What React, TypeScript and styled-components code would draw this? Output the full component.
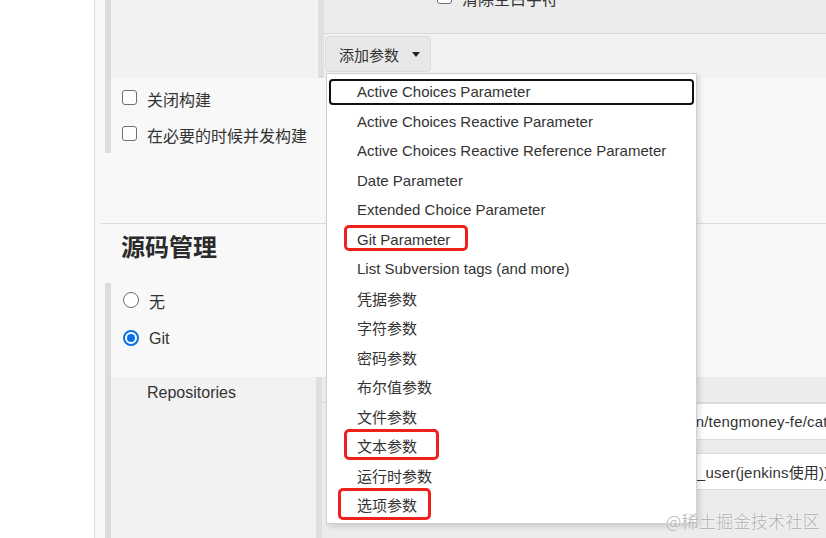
import React from 'react';
import styled, { createGlobalStyle } from 'styled-components';

const GlobalStyle = createGlobalStyle`
	html, body {
		margin: 0;
		padding: 0;
		background: #fff;
	}
	body {
		font-family: 'Liberation Sans', Arial, 'Noto Sans CJK SC', sans-serif;
		color: #333;
		overflow: hidden;
	}
	* {
		box-sizing: border-box;
	}
`;

const Page = styled.div`
	width: 826px;
	height: 538px;
	display: flex;
	overflow: hidden;
	position: relative;
`;

const Gutter = styled.div`
	width: 95px;
	flex: none;
	background: #fff;
	border-right: 1px solid #d9d9d9;
`;

const Main = styled.div`
	flex: 1;
	background: #f8f8f8;
	padding-left: 10px;
	display: flex;
	flex-direction: column;
`;

const Nested = styled.div<{ $height?: number }>`
	border-left: 6px solid #dcdcdc;
	height: ${(p) => (p.$height ? `${p.$height}px` : 'auto')};
	flex: ${(p) => (p.$height ? 'none' : '1')};
	display: flex;
	flex-direction: column;
`;

const Block = styled.div<{ $height?: number; $gap?: number }>`
	display: flex;
	height: ${(p) => (p.$height ? `${p.$height}px` : 'auto')};
	flex: ${(p) => (p.$height ? 'none' : '1')};
	margin-top: ${(p) => p.$gap ?? 0}px;
`;

const BlockLabel = styled.div<{ $width: number }>`
	width: ${(p) => p.$width}px;
	flex: none;
	background: #f2f2f2;
	padding: 7px 0 0 36px;
	font-size: 16px;
	line-height: 18px;
`;

const BlockBody = styled.div`
	flex: 1;
	border-left: 6px solid #dfdfdf;
	display: flex;
	flex-direction: column;
	min-width: 0;
`;

const TopBand = styled.div`
	height: 34px;
	background: #ececec;
	border-bottom: 1px solid #d9d9d9;
	overflow: hidden;
	padding-left: 102px;
`;

const BandBody = styled.div`
	flex: 1;
	background: #f2f2f2;
	padding: 2px 0 0 1px;
`;

const CheckRow = styled.label<{ $offset?: number; $height?: number }>`
	display: flex;
	align-items: center;
	gap: 10px;
	height: ${(p) => p.$height ?? 37}px;
	font-size: 16px;
	margin-top: ${(p) => p.$offset ?? 0}px;
	padding-left: 11px;
	white-space: nowrap;
`;

const Box = styled.span`
	width: 15px;
	height: 15px;
	flex: none;
	background: #fff;
	border: 1px solid #6f6f6f;
	border-radius: 3px;
	margin-top: -3px;
`;

const Radio = styled.span<{ $checked?: boolean }>`
	width: 16px;
	height: 16px;
	flex: none;
	margin-left: 1px;
	border-radius: 50%;
	background: #fff;
	border: ${(p) => (p.$checked ? '2px solid #0b6fe8' : '1px solid #6f6f6f')};
	display: flex;
	align-items: center;
	justify-content: center;
	margin-top: -2px;
	&::after {
		content: '';
		display: ${(p) => (p.$checked ? 'block' : 'none')};
		width: 8px;
		height: 8px;
		border-radius: 50%;
		background: #0b6fe8;
	}
`;

const AddWrap = styled.div`
	position: relative;
	display: inline-block;
`;

const AddButton = styled.button`
	height: 36px;
	width: 106px;
	display: flex;
	align-items: center;
	gap: 13px;
	padding: 0 0 0 13px;
	background: #e8e8e8;
	border: 1px solid #dadada;
	border-radius: 4px;
	font-family: inherit;
	font-size: 15px;
	color: #333;
	&::after {
		content: '';
		border-left: 4.5px solid transparent;
		border-right: 4.5px solid transparent;
		border-top: 5px solid #222;
		margin-top: 1px;
	}
`;

const Menu = styled.ul`
	position: absolute;
	left: 1px;
	top: 37px;
	width: 371px;
	height: 451px;
	margin: 0;
	padding: 3px 0 0;
	list-style: none;
	background: #fff;
	border: 1px solid #cfcfcf;
	box-shadow: 3px 3px 5px rgba(0, 0, 0, 0.12);
	z-index: 5;
`;

const MenuItem = styled.li<{ $focused?: boolean }>`
	height: 29.5px;
	display: flex;
	align-items: center;
	padding-left: 30px;
	font-size: 15px;
	color: #333;
	white-space: nowrap;
	position: relative;
	&::before {
		content: '';
		display: ${(p) => (p.$focused ? 'block' : 'none')};
		position: absolute;
		left: 2px;
		right: 2px;
		top: 2px;
		bottom: 2px;
		border: 2px solid #111;
		border-radius: 4px;
	}
`;

const RedMark = styled.span<{ $top: number; $left: number; $w: number; $h: number }>`
	position: absolute;
	top: ${(p) => p.$top}px;
	left: ${(p) => p.$left}px;
	width: ${(p) => p.$w}px;
	height: ${(p) => p.$h}px;
	border: 3px solid #f0211d;
	border-radius: 5px;
	pointer-events: none;
`;

const Spacer = styled.div<{ $h: number }>`
	height: ${(p) => p.$h}px;
	flex: none;
`;

const Divider = styled.hr`
	margin: 0 0 0 -4px;
	border: 0;
	border-top: 1px solid #dcdcdc;
`;

const Heading = styled.h2`
	margin: 0;
	padding: 8px 0 0 16px;
	height: 59px;
	font-family: 'Noto Sans CJK SC', sans-serif;
	font-size: 24px;
	line-height: 28px;
	font-weight: 700;
	color: #2b2b2b;
`;

const FieldHeader = styled.div`
	height: 26px;
	background: #ececec;
	border-bottom: 1px solid #d9d9d9;
`;

const FieldGroup = styled.div`
	display: flex;
	flex-direction: column;
	gap: 13px;
	padding-left: 14px;
	background: #ececec;
	flex: 1;
`;

const Field = styled.div<{ $indent: number }>`
	height: 37px;
	background: #fff;
	border: 1px solid #dcdcdc;
	border-right: 0;
	display: flex;
	align-items: center;
	padding-left: ${(p) => p.$indent}px;
	font-size: 15px;
	letter-spacing: 0.2px;
	white-space: nowrap;
	overflow: hidden;
	color: #333;
`;

const Watermark = styled.div`
	position: absolute;
	right: 6px;
	bottom: 5px;
	font-family: 'Noto Sans CJK SC', sans-serif;
	font-weight: 300;
	font-size: 17px;
	letter-spacing: 0.3px;
	color: rgba(150, 150, 150, 0.75);
	text-shadow: 0 0 2px #fff;
	z-index: 9;
`;

const params = [
	'Active Choices Parameter',
	'Active Choices Reactive Parameter',
	'Active Choices Reactive Reference Parameter',
	'Date Parameter',
	'Extended Choice Parameter',
	'Git Parameter',
	'List Subversion tags (and more)',
	'凭据参数',
	'字符参数',
	'密码参数',
	'布尔值参数',
	'文件参数',
	'文本参数',
	'运行时参数',
	'选项参数',
];

const marks = [
	{ top: 151, left: 17, w: 124, h: 26 },
	{ top: 355, left: 17, w: 95, h: 31 },
	{ top: 414, left: 11, w: 93, h: 32 },
];

const App = () => {
	return (
		<>
			<GlobalStyle />
			<Page>
				<Gutter />
				<Main>
					<Nested $height={153}>
						<Block $height={78}>
							<BlockLabel $width={207} />
							<BlockBody>
								<TopBand>
									<CheckRow $offset={-21}>
										<Box />
										清除空白字符
									</CheckRow>
								</TopBand>
								<BandBody>
									<AddWrap>
										<AddButton>添加参数</AddButton>
										<Menu>
											{params.map((name, i) => (
												<MenuItem key={name} $focused={i === 0}>
													{name}
												</MenuItem>
											))}
											{marks.map((m, i) => (
												<RedMark key={i} $top={m.top} $left={m.left} $w={m.w} $h={m.h} />
											))}
										</Menu>
									</AddWrap>
								</BandBody>
							</BlockBody>
						</Block>
						<CheckRow $offset={3}>
							<Box />
							关闭构建
						</CheckRow>
						<CheckRow>
							<Box />
							在必要的时候并发构建
						</CheckRow>
					</Nested>
					<Spacer $h={70} />
					<Divider />
					<Heading>源码管理</Heading>
					<Nested>
						<CheckRow $offset={-1} $height={38}>
							<Radio />
							无
						</CheckRow>
						<CheckRow $height={38}>
							<Radio $checked />
							Git
						</CheckRow>
						<Block $gap={19}>
							<BlockLabel $width={205}>Repositories</BlockLabel>
							<BlockBody>
								<FieldHeader />
								<FieldGroup>
									<Field $indent={212}>http://git.tengmoney.cn/tengmoney-fe/catering.git</Field>
									<Field $indent={246}>root/****** (gitlab_user(jenkins使用))</Field>
								</FieldGroup>
							</BlockBody>
						</Block>
					</Nested>
				</Main>
				<Watermark>@稀土掘金技术社区</Watermark>
			</Page>
		</>
	);
};

export default App;
